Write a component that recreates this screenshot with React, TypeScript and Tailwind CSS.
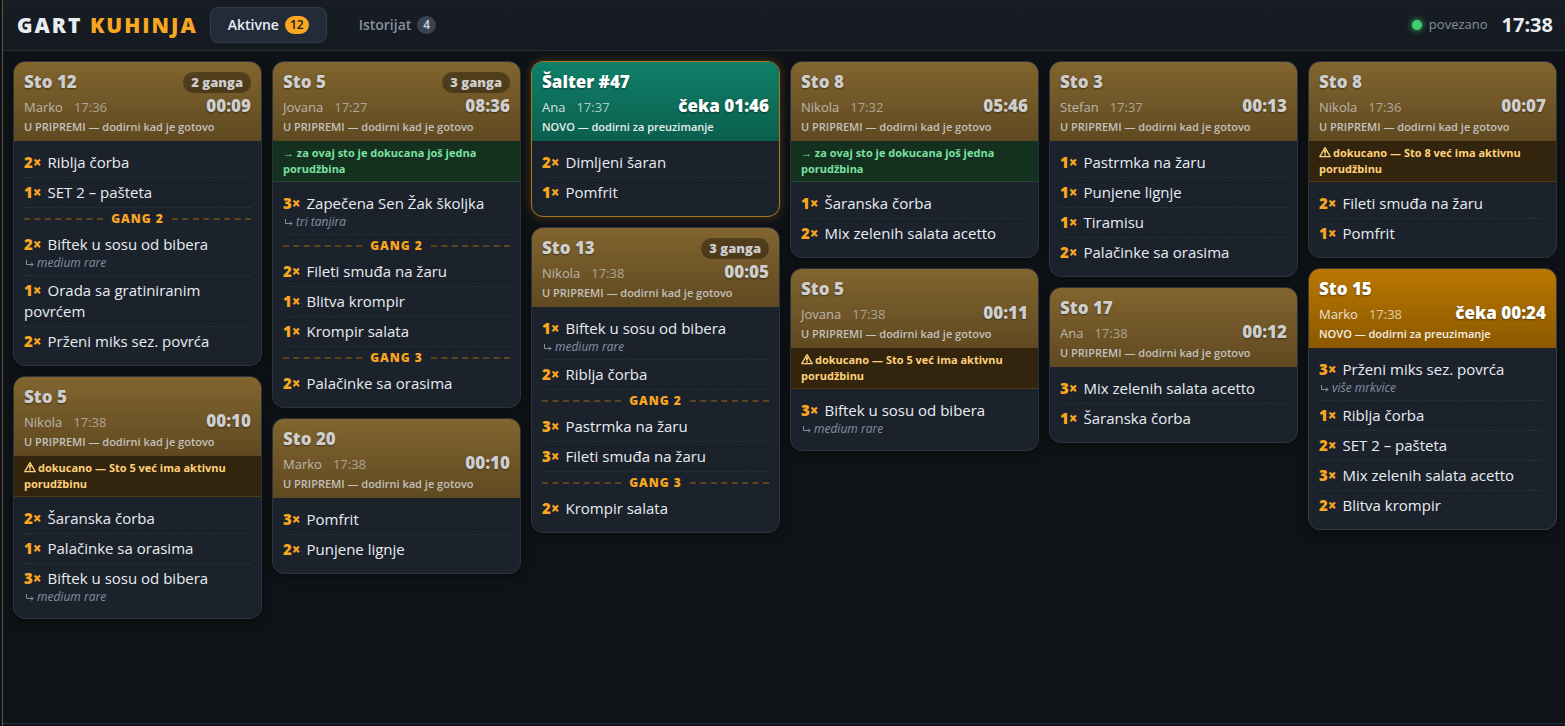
import { useState, type FC } from 'react';

type Tone = 'prep' | 'salter' | 'novo';

interface Item {
  qty: number;
  name: string;
  note?: string;
}

interface Order {
  id: number;
  title: string;
  waiter: string;
  time: string;
  timer: string;
  tone: Tone;
  banner?: { kind: 'info' | 'warn'; text: string };
  gangs: Item[][];
}

const INFO = { kind: 'info' as const, text: '→ za ovaj sto je dokucana još jedna porudžbina' };

const warn = (sto: string) => ({
  kind: 'warn' as const,
  text: `dokucano — ${sto} već ima aktivnu porudžbinu`,
});

const it = (qty: number, name: string, note?: string): Item => ({ qty, name, note });

const COLUMNS: Order[][] = [
  [
    {
      id: 1, title: 'Sto 12', waiter: 'Marko', time: '17:36', timer: '00:09', tone: 'prep',
      gangs: [
        [it(2, 'Riblja čorba'), it(1, 'SET 2 – pašteta')],
        [it(2, 'Biftek u sosu od bibera', 'medium rare'), it(1, 'Orada sa gratiniranim povrćem'), it(2, 'Prženi miks sez. povrća')],
      ],
    },
    {
      id: 2, title: 'Sto 5', waiter: 'Nikola', time: '17:38', timer: '00:10', tone: 'prep', banner: warn('Sto 5'),
      gangs: [[it(2, 'Šaranska čorba'), it(1, 'Palačinke sa orasima'), it(3, 'Biftek u sosu od bibera', 'medium rare')]],
    },
  ],
  [
    {
      id: 3, title: 'Sto 5', waiter: 'Jovana', time: '17:27', timer: '08:36', tone: 'prep', banner: INFO,
      gangs: [
        [it(3, 'Zapečena Sen Žak školjka', 'tri tanjira')],
        [it(2, 'Fileti smuđa na žaru'), it(1, 'Blitva krompir'), it(1, 'Krompir salata')],
        [it(2, 'Palačinke sa orasima')],
      ],
    },
    {
      id: 4, title: 'Sto 20', waiter: 'Marko', time: '17:38', timer: '00:10', tone: 'prep',
      gangs: [[it(3, 'Pomfrit'), it(2, 'Punjene lignje')]],
    },
  ],
  [
    {
      id: 5, title: 'Šalter #47', waiter: 'Ana', time: '17:37', timer: 'čeka 01:46', tone: 'salter',
      gangs: [[it(2, 'Dimljeni šaran'), it(1, 'Pomfrit')]],
    },
    {
      id: 6, title: 'Sto 13', waiter: 'Nikola', time: '17:38', timer: '00:05', tone: 'prep',
      gangs: [
        [it(1, 'Biftek u sosu od bibera', 'medium rare'), it(2, 'Riblja čorba')],
        [it(3, 'Pastrmka na žaru'), it(3, 'Fileti smuđa na žaru')],
        [it(2, 'Krompir salata')],
      ],
    },
  ],
  [
    {
      id: 7, title: 'Sto 8', waiter: 'Nikola', time: '17:32', timer: '05:46', tone: 'prep', banner: INFO,
      gangs: [[it(1, 'Šaranska čorba'), it(2, 'Mix zelenih salata acetto')]],
    },
    {
      id: 8, title: 'Sto 5', waiter: 'Jovana', time: '17:38', timer: '00:11', tone: 'prep', banner: warn('Sto 5'),
      gangs: [[it(3, 'Biftek u sosu od bibera', 'medium rare')]],
    },
  ],
  [
    {
      id: 9, title: 'Sto 3', waiter: 'Stefan', time: '17:37', timer: '00:13', tone: 'prep',
      gangs: [[it(1, 'Pastrmka na žaru'), it(1, 'Punjene lignje'), it(1, 'Tiramisu'), it(2, 'Palačinke sa orasima')]],
    },
    {
      id: 10, title: 'Sto 17', waiter: 'Ana', time: '17:38', timer: '00:12', tone: 'prep',
      gangs: [[it(3, 'Mix zelenih salata acetto'), it(1, 'Šaranska čorba')]],
    },
  ],
  [
    {
      id: 11, title: 'Sto 8', waiter: 'Nikola', time: '17:36', timer: '00:07', tone: 'prep', banner: warn('Sto 8'),
      gangs: [[it(2, 'Fileti smuđa na žaru'), it(1, 'Pomfrit')]],
    },
    {
      id: 12, title: 'Sto 15', waiter: 'Marko', time: '17:38', timer: 'čeka 00:24', tone: 'novo',
      gangs: [
        [
          it(3, 'Prženi miks sez. povrća', 'više mrkvice'),
          it(1, 'Riblja čorba'),
          it(2, 'SET 2 – pašteta'),
          it(3, 'Mix zelenih salata acetto'),
          it(2, 'Blitva krompir'),
        ],
      ],
    },
  ],
];

const HEAD: Record<Tone, string> = {
  prep: 'from-[#82652f] to-[#604921] text-[#cecece]',
  salter: 'from-[#0f8069] to-[#0b5f4e] text-white',
  novo: 'from-[#bb7800] to-[#8b5800] text-white',
};

const FRAME: Record<Tone, string> = {
  prep: 'border-[#2a3441] shadow-[0_2px_8px_rgba(0,0,0,0.35)]',
  salter: 'border-[#a87827] shadow-[0_0_10px_rgba(249,166,32,0.25)]',
  novo: 'border-[#3a3d3f] shadow-[0_2px_8px_rgba(0,0,0,0.35)]',
};

const WarnIcon = () => (
  <svg className="inline-block w-3 h-3 mr-[2px] align-[-1px]" viewBox="0 0 12 12" fill="none" stroke="currentColor" strokeWidth="1.3" strokeLinejoin="round" aria-hidden="true">
    <path d="M6 1.6 11.2 10.6H.8Z" />
    <path d="M6 4v3.4M6 8.3v1.3" strokeWidth="1.8" />
  </svg>
);

const NoteArrow = () => (
  <svg className="inline-block w-2 h-2 ml-[2px] mr-[3px]" viewBox="0 0 8 8" fill="none" stroke="currentColor" strokeWidth="1" aria-hidden="true">
    <path d="M.5 0v4.5h6.5M5 2.5l2 2-2 2" />
  </svg>
);

const GangDivider: FC<{ n: number }> = ({ n }) => (
  <div className="flex items-center gap-2 h-[22px] text-xs leading-4 font-extrabold tracking-[1px] text-[#f9a620]">
    <span className="flex-1 border-t-2 border-dashed border-[#5e441b]" />
    GANG {n}
    <span className="flex-1 border-t-2 border-dashed border-[#5e441b]" />
  </div>
);

const OrderCard: FC<{ order: Order }> = ({ order }) => {
  const { title, waiter, time, timer, tone, banner, gangs } = order;

  return (
    <article className={`rounded-xl border bg-[#1c222c] overflow-hidden ${FRAME[tone]}`}>
      <button type="button" className={`block w-full px-[10px] pt-2 pb-[6px] text-left cursor-pointer bg-linear-to-b ${HEAD[tone]}`}>
        <span className="flex items-center justify-between h-6">
          <span className="text-[17px] leading-6 font-extrabold [text-shadow:0_1px_2px_rgba(0,0,0,0.45)]">{title}</span>
          {gangs.length > 1 && (
            <span className="rounded-full bg-black/35 px-2 text-[13px] leading-[21px] font-extrabold">{gangs.length} ganga</span>
          )}
        </span>
        <span className="flex items-baseline h-6">
          <span className="text-[13px] opacity-80">{waiter}</span>
          <span className="ml-[11px] text-[13px] opacity-65">{time}</span>
          <span className="ml-auto text-[17px] leading-6 font-extrabold [text-shadow:0_1px_2px_rgba(0,0,0,0.45)]">{timer}</span>
        </span>
        <span className="block text-[11px] leading-[17px] font-semibold opacity-90 whitespace-nowrap">
          {tone === 'prep' ? 'U PRIPREMI — dodirni kad je gotovo' : 'NOVO — dodirni za preuzimanje'}
        </span>
      </button>

      {banner && (
        <p
          className={`px-[10px] py-1 border-b text-[11px] leading-4 font-bold ${
            banner.kind === 'info' ? 'bg-[#14301f] border-[#1f4a30] text-[#7ce0a0]' : 'bg-[#33240d] border-[#52390f] text-[#ffd27a]'
          }`}
        >
          {banner.kind === 'warn' && <WarnIcon />}
          {banner.text}
        </p>
      )}

      <div className="px-[10px] pt-[7px] pb-[9px]">
        {gangs.map((items, g) => (
          <div key={g} className="group">
            {g > 0 && <GangDivider n={g + 1} />}
            <ul className="group-last:[&>li:last-child]:border-b-0">
              {items.map((item) => (
                <li key={item.name} className="py-1 border-b border-dashed border-[#29313d] text-[15px] leading-[21px] text-[#e8edf2]">
                  <span className="mr-[2px] font-extrabold text-[#f9a620]">{item.qty}×</span> {item.name}
                  {item.note && (
                    <span className="block text-xs leading-4 italic text-[#8391a1]">
                      <NoteArrow />
                      {item.note}
                    </span>
                  )}
                </li>
              ))}
            </ul>
          </div>
        ))}
      </div>
    </article>
  );
};

export default function App() {
  const [tab, setTab] = useState<'aktivne' | 'istorijat'>('aktivne');

  const tabClass = (active: boolean) =>
    `flex items-center gap-[6px] h-9 px-[17px] rounded-lg border text-sm font-semibold cursor-pointer ${
      active ? 'bg-[#222c38] border-[#2f3b4a] text-[#e8edf2]' : 'border-transparent text-[#8391a1]'
    }`;

  return (
    <div className="flex min-h-screen bg-[#0f1216] font-['Open_Sans','Noto_Sans',sans-serif]">
      <div className="w-[3px] shrink-0 bg-[#141112] border-r border-[#57544f]" />
      <div className="flex flex-col flex-1 min-w-0">
        <header className="flex items-center gap-3 h-[51px] pl-[14px] pr-3 border-b border-[#232e39] bg-linear-to-b from-[#181d25] to-[#151920]">
          <h1 className="text-[21px] leading-6 font-extrabold tracking-[2px] text-[#e8edf2]">
            GART <span className="text-[#f9a620]">KUHINJA</span>
          </h1>
          <nav className="flex gap-[14px]">
            <button type="button" onClick={() => setTab('aktivne')} className={tabClass(tab === 'aktivne')}>
              Aktivne
              <span className="rounded-full bg-[#f9a620] px-[5px] text-xs leading-[18px] font-semibold text-[#14181f]">12</span>
            </button>
            <button type="button" onClick={() => setTab('istorijat')} className={tabClass(tab === 'istorijat')}>
              Istorijat
              <span className="rounded-full bg-[#384452] px-[6px] text-xs leading-[18px] font-semibold text-[#d0d7de]">4</span>
            </button>
          </nav>
          <div className="flex items-center ml-auto text-[13px] text-[#8391a1]">
            <span className="w-[10px] h-[10px] mr-[7px] rounded-full bg-[#3ecf6e] shadow-[0_0_6px_#3ecf6e]" />
            povezano
            <time className="ml-[14px] text-xl leading-6 font-bold text-[#e8edf2]">17:38</time>
          </div>
        </header>

        <main className="grid flex-1 grid-cols-6 items-start gap-[10px] pt-[10px] pl-[10px] pr-2 pb-3">
          {COLUMNS.map((orders, i) => (
            <section key={i} className="flex flex-col gap-[10px]">
              {orders.map((order) => (
                <OrderCard key={order.id} order={order} />
              ))}
            </section>
          ))}
        </main>
        <footer className="h-[3px] border-t border-[#232e39]" />
      </div>
    </div>
  );
}
